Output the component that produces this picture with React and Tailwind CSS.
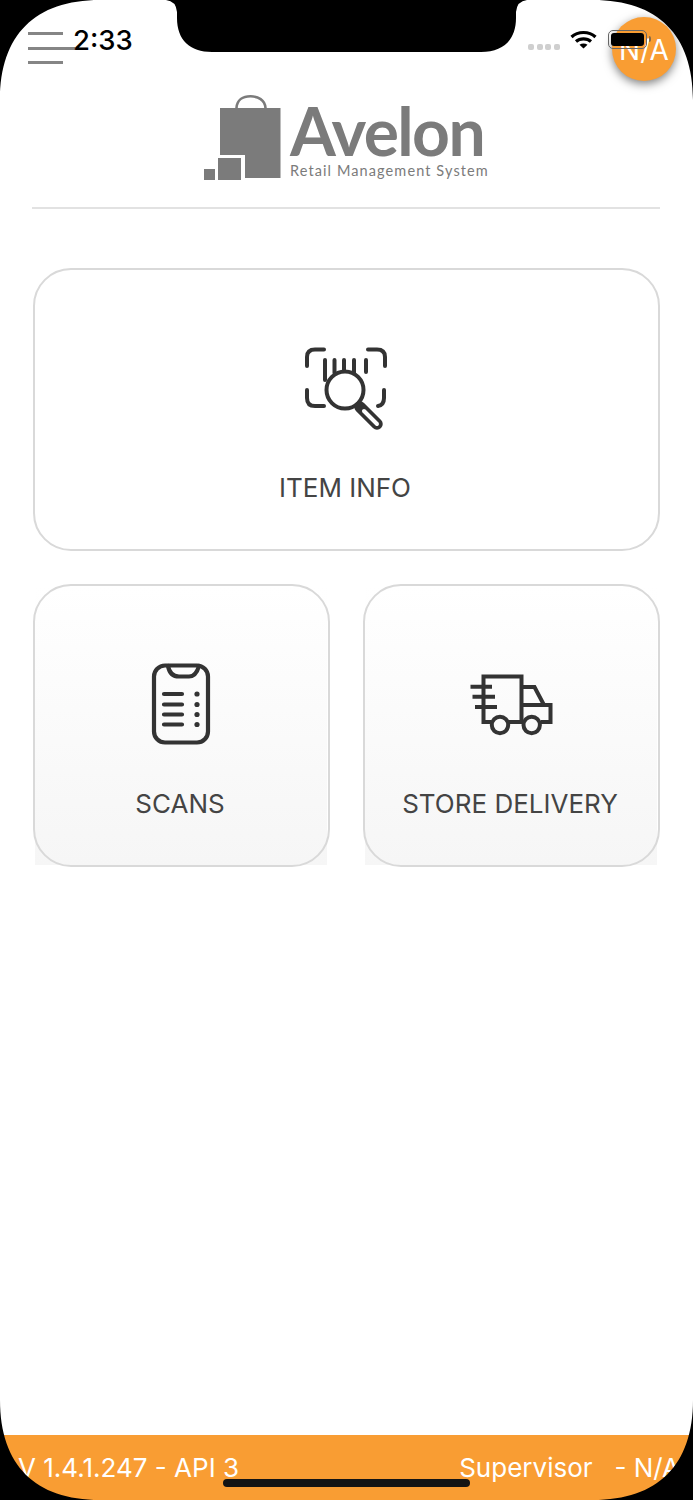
function BagLogo() {
  return (
    <svg width="77" height="86" viewBox="204 95 77 86" fill="none" className="shrink-0">
      <path d="M236.5 108 C237 100 243 96.3 250.5 96.3 C258 96.3 265 100 265.5 108" stroke="#7b7b7b" strokeWidth="2.6" />
      <path d="M220 108 H280.5 V178 H245 V155 H220 Z" fill="#7b7b7b" />
      <rect x="218" y="158" width="23" height="22" fill="#7b7b7b" />
      <rect x="204" y="169" width="11" height="11" fill="#7b7b7b" />
    </svg>
  );
}

function ItemInfoIcon() {
  return (
    <svg width="110" height="105" viewBox="0 0 110 105" fill="none" stroke="#333" strokeWidth="4" strokeLinecap="round" strokeLinejoin="round" className="mt-[67px]">
      <path d="M17 31 V22 Q17 14.5 25 14.5 H34" />
      <path d="M78 14.5 H87 Q95 14.5 95 22 V31" />
      <path d="M17 55 V63 Q17 71 25 71 H34" />
      <path d="M94 55 V63 Q94 70 88 71" />
      <path d="M35 25 V45 M44.5 25 V38 M54 25 V36 M64 25 V38 M76 25 V37" />
      <circle cx="55" cy="55" r="18.5" />
      <path d="M70 72 L87 89" strokeWidth="11.5" />
      <path d="M74 76 L87 89" stroke="#fff" strokeWidth="4" />
    </svg>
  );
}

function ScansIcon() {
  return (
    <svg width="100" height="105" viewBox="0 0 100 105" fill="none" stroke="#333" strokeWidth="4.2" strokeLinecap="round" strokeLinejoin="round" className="mt-[66px]">
      <rect x="24" y="15.5" width="54" height="77" rx="11" />
      <path d="M38 16 Q40 26.5 49 26.5 H59 Q66 26.5 69 16" />
      <path d="M34 44 H52 M34 54.5 H52 M34 64.5 H52 M34 74.5 H52" />
      <g fill="#333" stroke="none">
        <circle cx="67" cy="44" r="2.6" />
        <circle cx="67" cy="54.5" r="2.6" />
        <circle cx="67" cy="64.5" r="2.6" />
        <circle cx="67" cy="74.5" r="2.6" />
      </g>
    </svg>
  );
}

function TruckIcon() {
  return (
    <svg width="100" height="85" viewBox="0 0 100 85" fill="none" stroke="#333" strokeWidth="4" className="mt-[76px]">
      <path d="M31 62 H23.5 V16.5 H61.5 V62 H49 M61.5 62 H63" />
      <path d="M10.5 26.7 H32 M12.5 36.7 H35 M15 47 H37" />
      <path d="M61.5 27 H74.5 L84 45 H61.5" />
      <path d="M84 45 H90.5 V62 H81" />
      <circle cx="40" cy="65" r="8.2" />
      <circle cx="71.7" cy="65" r="8.2" />
    </svg>
  );
}

function Card({ label, soft, icon }) {
  return (
    <div className="relative h-[283px] flex flex-col items-center">
      {soft && <div className="absolute top-[2px] left-[2px] right-[3px] bottom-[2px] bg-gradient-to-b from-white to-[#f6f6f6]" />}
      <div className="absolute inset-0 rounded-[38px] border-[2.5px] border-[#d9d9d9]" />
      <div className="relative h-[205px] flex justify-center items-start -ml-[3px]">{icon}</div>
      <div className="relative text-[26px] leading-[30px] text-[#444] -ml-[3px] whitespace-nowrap">{label}</div>
    </div>
  );
}

export default function App() {
  return (
    <div className="relative w-[693px] h-[1500px] overflow-hidden bg-white font-['Inter',sans-serif]">
      <div className="flex flex-col h-full">
        <div className="flex justify-between items-start h-[81px] pl-[28px] pr-[17px] pt-[17px]">
          <div className="flex flex-col gap-[11.5px] pt-[15px]">
            <div className="w-[35px] h-[3px] bg-[#858585]" />
            <div className="w-[47px] h-[3px] bg-[#858585]" />
            <div className="w-[35px] h-[3px] bg-[#858585]" />
          </div>
          <div className="w-[64px] h-[64px] rounded-full bg-[#f99d33] shadow-[0_3px_10px_rgba(0,0,0,0.5)] flex items-center justify-center text-white text-[28px] pt-[1px]">
            N/A
          </div>
        </div>

        <div className="flex items-start h-[126px] pt-[14px] pl-[204px]">
          <BagLogo />
          <div className="ml-[9px] flex flex-col text-[#7b7b7b] font-['Lato',sans-serif]">
            <div className="text-[66px] leading-[54px] font-bold tracking-[-1.6px] mt-[9px] h-[54px]">Avelon</div>
            <div className="text-[14.5px] leading-[16px] tracking-[1.1px] font-normal mt-[5px] whitespace-nowrap">Retail Management System</div>
          </div>
        </div>
        <div className="ml-[32px] mr-[33px] h-[2px] bg-[#e2e2e2]" />

        <div className="flex flex-col gap-[33px] pt-[59px] pl-[33px] pr-[33px]">
          <Card label="ITEM INFO" icon={<ItemInfoIcon />} />
          <div className="grid grid-cols-2 gap-[33px]">
            <Card soft label="SCANS" icon={<ScansIcon />} />
            <Card soft label="STORE DELIVERY" icon={<TruckIcon />} />
          </div>
        </div>

        <div className="mt-auto h-[65px] bg-[#f99d33] flex justify-between pl-[18px] pr-[13px] pt-[16px] text-white text-[26px] leading-[34px] whitespace-pre">
          <span>V 1.4.1.247 - API 3</span>
          <span>Supervisor   - N/A</span>
        </div>
      </div>

      <svg className="absolute top-0 left-0" width="693" height="1500" viewBox="0 0 693 1500" fill="#000">
        <path d="M166 0 Q176 1 177 12 V18 C177 40 190 52 212 52 H481 C503 52 516 40 516 18 V12 Q517 1 527 0 Z" />
        <path d="M0 0 H100 C35 0 0 35 0 100 Z" />
        <path d="M693 0 H593 C658 0 693 35 693 100 Z" />
        <path d="M0 1500 H100 C35 1500 0 1465 0 1400 Z" />
        <path d="M693 1500 H593 C658 1500 693 1465 693 1400 Z" />
      </svg>

      <div className="absolute left-[73px] top-[23px] text-[27.5px] leading-[34px] font-medium text-black">2:33</div>

      <div className="absolute left-[528px] top-[44px] flex gap-[2.7px]">
        <div className="w-[6px] h-[6px] rounded-[2px] bg-[#cfcfcf]" />
        <div className="w-[6px] h-[6px] rounded-[2px] bg-[#cfcfcf]" />
        <div className="w-[6px] h-[6px] rounded-[2px] bg-[#cfcfcf]" />
        <div className="w-[6px] h-[6px] rounded-[2px] bg-[#cfcfcf]" />
      </div>

      <svg className="absolute left-[570px] top-[29px]" width="27" height="21" viewBox="0 0 27 21" fill="none" stroke="#000" strokeWidth="3.2">
        <path d="M1.5 8 C8 2 19 2 25.5 8" />
        <path d="M6 12.5 C10 9 17 9 21 12.5" />
        <path d="M13.5 19.5 L9.5 15.8 C12 14 15 14 17.5 15.8 Z" fill="#000" stroke="none" />
      </svg>

      <div className="absolute left-[608px] top-[30px] w-[39px] h-[19px] rounded-[5px] border border-[#666] p-[2px]">
        <div className="w-full h-full rounded-[3px] bg-black" />
      </div>
      <div className="absolute left-[649px] top-[36px] w-[2px] h-[6px] rounded-r-[2px] bg-[#8a6a45]" />

      <div className="absolute left-[223px] top-[1479px] w-[247px] h-[8px] rounded-full bg-[#141414]" />
    </div>
  );
}
